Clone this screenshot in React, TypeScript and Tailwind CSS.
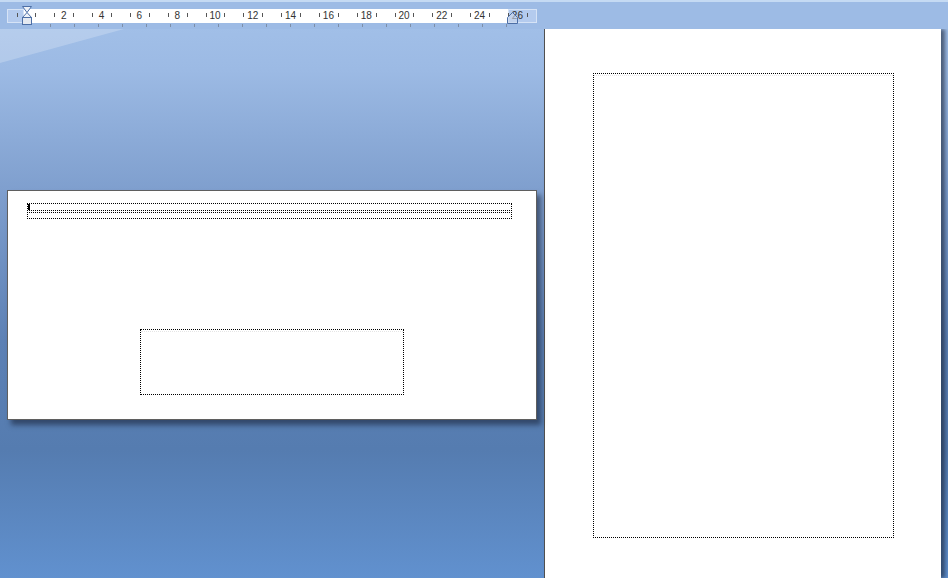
import React from "react";

// Word-style print layout: blue workspace, ruler, envelope page and a letter page.

const PX_PER_STEP = 37.8; // one numbered step (2 cm) on the ruler
const ZERO = 19; // zero point, relative to the ruler's left edge

function Ruler() {
  const numbers = Array.from({ length: 13 }, (_, i) => i + 1);
  const ticks = Array.from({ length: 28 }, (_, i) => i - 1);
  const tabs = Array.from({ length: 20 }, (_, i) => i + 1);

  return (
    <div className="relative ml-[7px] mt-[9px] h-[14px] w-[530px]">
      {/* margin areas + white text area */}
      <div className="flex h-full w-full">
        <div className="h-full w-[17px] border border-[#d6e3f6] bg-[#b4cbee]" />
        <div className="h-full w-[484px] bg-white" />
        <div className="h-full w-[29px] border border-[#d6e3f6] bg-[#b4cbee]" />
      </div>

      {ticks.map((j) => (
        <span
          key={`t${j}`}
          className="absolute top-[4px] h-[4px] w-px bg-[#555]"
          style={{ left: Math.round(ZERO + 9.45 * (2 * j + 1)) }}
        />
      ))}

      {numbers.map((n) => (
        <span
          key={`n${n}`}
          className="absolute top-0 -translate-x-1/2 font-['Tahoma','Liberation_Sans',sans-serif] text-[10px] leading-[14px] text-[#333]"
          style={{ left: ZERO + PX_PER_STEP * n }}
        >
          {n * 2}
        </span>
      ))}

      {/* default tab stops under the ruler */}
      {tabs.map((t) => (
        <span
          key={`tab${t}`}
          className="absolute top-[15px] h-[3px] w-px bg-[#7d8ea8]"
          style={{ left: ZERO + 24 * t }}
        />
      ))}

      {/* left indent marker */}
      <svg className="absolute left-[14px] top-[-3px]" width="12" height="22" viewBox="0 0 12 22">
        <path d="M1.5 0.5 H10.5 L6 6.5 Z" fill="#eef2f8" stroke="#4d6fa6" />
        <path d="M6 6.5 L10.5 11.5 H1.5 Z" fill="#eef2f8" stroke="#4d6fa6" />
        <rect x="1.5" y="11.5" width="9" height="7" fill="#e4e9f1" stroke="#4d6fa6" />
      </svg>

      {/* right indent marker */}
      <svg className="absolute left-[500px] top-[3px]" width="11" height="12" viewBox="0 0 11 12">
        <path d="M0.5 11.5 V5.5 L5.5 0.5 L10.5 5.5 V11.5 Z" fill="#c9d7ec" fillOpacity="0.6" stroke="#4d6fa6" />
      </svg>
    </div>
  );
}

export default function App() {
  return (
    <div className="relative flex h-[578px] w-[948px] flex-col overflow-hidden bg-[linear-gradient(180deg,#a4c2ea_0px,#9cbae4_70px,#7f9fce_190px,#5d81b5_340px,#557cb0_450px,#6191cf_578px)]">
      {/* header band with ruler */}
      <div className="relative h-[29px] shrink-0 bg-[#9dbbe5]">
        <div className="h-[2px] w-full bg-[#c5daf3]" />
        <div className="-mt-[2px]">
          <Ruler />
        </div>
      </div>

      <div className="flex flex-1">
        {/* left workspace with envelope */}
        <div className="relative w-[544px] shrink-0">
          <svg className="absolute left-0 top-0" width="130" height="40" viewBox="0 0 130 40">
            <path d="M0 0 H124 L0 34 Z" fill="#ffffff" fillOpacity="0.22" />
          </svg>

          <div className="relative ml-[7px] mt-[161px] flex h-[230px] w-[530px] flex-col border border-[#5f5f5f] bg-white shadow-[4px_5px_5px_rgba(20,30,50,0.55)]">
            <div className="ml-[19px] mt-[12px] flex w-[485px] flex-col">
              <div className="relative h-[8px] border border-dotted border-black">
                <span className="absolute left-0 top-0 h-[6px] w-[2px] bg-black" />
              </div>
              <div className="mt-[1px] h-[7px] border border-dotted border-black" />
            </div>

            <div className="ml-[132px] mt-[110px] h-[66px] w-[264px] border border-dotted border-black">
              <div className="mt-[1px] border-t border-dotted border-[#e6e6e6]" />
            </div>
          </div>
        </div>

        {/* letter page */}
        <div className="w-[397px] shrink-0 border-l border-[#505050] bg-white shadow-[4px_0_4px_rgba(20,30,50,0.6)]">
          <div className="ml-[48px] mt-[44px] h-[465px] w-[301px] border border-dotted border-black">
            <div className="mt-[1px] border-t border-dotted border-[#e6e6e6]" />
          </div>
        </div>
      </div>
    </div>
  );
}
